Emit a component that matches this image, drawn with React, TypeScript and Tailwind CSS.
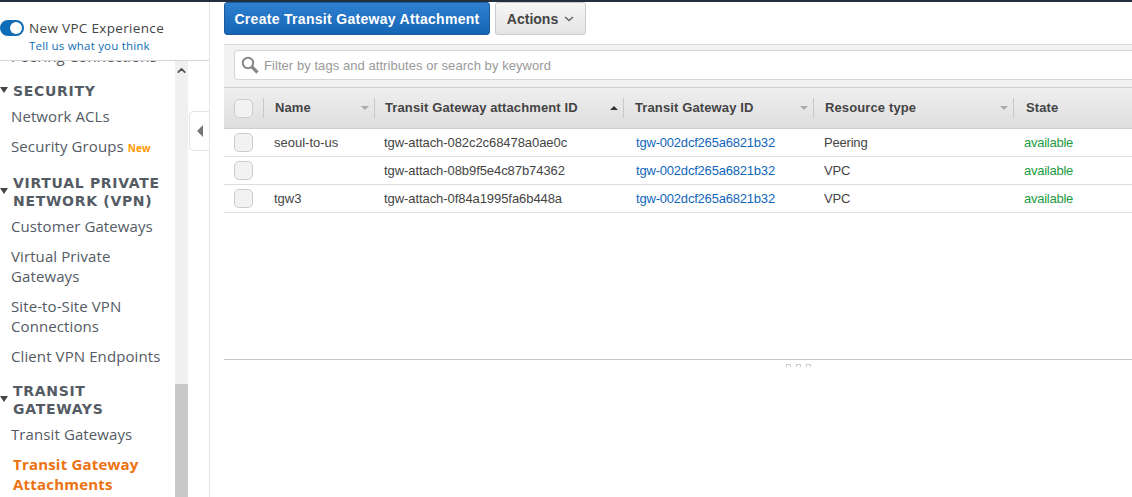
import { ChevronUp } from 'lucide-react'

const rows = [
  { name: 'seoul-to-us', id: 'tgw-attach-082c2c68478a0ae0c', type: 'Peering' },
  { name: '', id: 'tgw-attach-08b9f5e4c87b74362', type: 'VPC' },
  { name: 'tgw3', id: 'tgw-attach-0f84a1995fa6b448a', type: 'VPC' },
]

function NavItem({ children, active }: { children: React.ReactNode; active?: boolean }) {
  return (
    <div
      className={
        active
          ? 'pl-[13px] mb-2.5 text-[15px] font-bold leading-5 tracking-[0.2px] text-[#ec7211]'
          : 'pl-[11px] mb-2.5 text-[15px] leading-5 tracking-[0.1px] text-[#545b64]'
      }
    >
      {children}
    </div>
  )
}

function NavSection({ children }: { children: React.ReactNode }) {
  return (
    <div className="flex items-center mt-4 mb-1.5">
      <span className="w-0 h-0 -mt-[3px] border-x-[4px] border-x-transparent border-t-[6px] border-t-[#444] shrink-0 mr-[5px]" />
      <span className="font-['DejaVu_Sans',sans-serif] text-[14px] font-bold leading-[18px] tracking-[0.7px] text-[#545b64]">{children}</span>
    </div>
  )
}

function HeadCell({ label, arrow, up, pad = 'pl-[11px]' }: { label: string; arrow?: boolean; up?: boolean; pad?: string }) {
  return (
    <div className={`flex items-center justify-between h-5 pr-[5px] border-l border-[#c8c8c8] ${pad}`}>
      <span className="text-[13px] font-bold tracking-[0.12px] text-[#444]">{label}</span>
      {arrow && (
        <span
          className={
            up
              ? 'w-0 h-0 border-x-[4px] border-x-transparent border-b-[4px] border-b-[#333]'
              : 'w-0 h-0 border-x-[4px] border-x-transparent border-t-[4px] border-t-[#aaa]'
          }
        />
      )}
    </div>
  )
}

function Check() {
  return <div className="w-[19px] h-[19px] rounded-[5px] border border-[#ccc] bg-[#f2f2f2]" />
}

export default function App() {
  return (
    <div className="w-[1132px] h-[497px] overflow-hidden bg-white flex flex-col font-['Liberation_Sans',sans-serif]">
      <div className="h-0.5 shrink-0 bg-[#232f3e]" />
      <div className="flex flex-1 min-h-0">
        <aside className="w-[210px] shrink-0 border-r border-[#e4e4e4] flex flex-col font-['Open_Sans',sans-serif]">
          <div className="h-[59px] shrink-0 border-b border-[#d5d5d5] pt-[15px]">
            <div className="flex items-center">
              <div className="w-6 h-4 rounded-full bg-[#0f6cb6] flex items-center justify-end pr-0.5">
                <div className="w-3 h-3 rounded-full bg-white" />
              </div>
              <span className="ml-[5px] text-[13.5px] leading-[22px] tracking-[0.33px] text-[#444]">New VPC Experience</span>
            </div>
            <div className="pl-[29px] text-[11.5px] leading-[14px] tracking-[0.2px] text-[#0f6cb6]">Tell us what you think</div>
          </div>
          <div className="flex flex-1 min-h-0">
            <nav className="w-[175px] shrink-0 overflow-hidden">
              <div className="-mt-[15px]">
                <div className="pl-[11px] text-[15px] leading-5 tracking-[0.1px] text-[#545b64]">Peering Connections</div>
                <NavSection>SECURITY</NavSection>
                <NavItem>Network ACLs</NavItem>
                <NavItem>
                  Security Groups <span className="text-[10px] font-bold text-[#f90]">New</span>
                </NavItem>
                <NavSection>
                  VIRTUAL PRIVATE
                  <br />
                  NETWORK (VPN)
                </NavSection>
                <NavItem>Customer Gateways</NavItem>
                <NavItem>
                  Virtual Private
                  <br />
                  Gateways
                </NavItem>
                <NavItem>
                  Site-to-Site VPN
                  <br />
                  Connections
                </NavItem>
                <NavItem>Client VPN Endpoints</NavItem>
                <NavSection>
                  TRANSIT
                  <br />
                  GATEWAYS
                </NavSection>
                <NavItem>Transit Gateways</NavItem>
                <NavItem active>
                  Transit Gateway
                  <br />
                  Attachments
                </NavItem>
              </div>
            </nav>
            <div className="w-[13px] shrink-0 bg-[#f0f0f0] flex flex-col">
              <div className="flex-1 pt-[3px] flex justify-center">
                <ChevronUp size={13} strokeWidth={3} className="text-[#505050]" />
              </div>
              <div className="h-[113px] bg-[#c8c8c8]" />
            </div>
            <div className="flex-1 pl-px pt-[50px]">
              <div className="h-10 rounded-l-[5px] border border-r-0 border-[#e4e4e4] flex items-center pl-[7px]">
                <span className="w-0 h-0 border-y-[6px] border-y-transparent border-r-[6px] border-r-[#777]" />
              </div>
            </div>
          </div>
        </aside>
        <main className="flex-1 min-w-0 pl-[14px] flex flex-col overflow-hidden">
          <div className="flex gap-[5px] h-[42px] shrink-0">
            <button className="h-[33px] w-[266px] pt-px rounded-[3px] border border-[#1a5c9e] bg-gradient-to-b from-[#2f80d1] to-[#1565b5] text-[14px] font-bold tracking-[0.3px] text-white">
              Create Transit Gateway Attachment
            </button>
            <button className="h-[33px] w-[91px] pt-px rounded-[3px] border border-[#ccc] bg-gradient-to-b from-[#f6f6f6] to-[#e4e4e4] text-[14px] font-bold text-[#444] flex items-center justify-center gap-[6px]">
              Actions
              <svg width="10" height="6" viewBox="0 0 10 6" fill="none" stroke="#666" strokeWidth="1.6">
                <path d="M1 1l4 3.5L9 1" />
              </svg>
            </button>
          </div>
          <div className="h-[43px] shrink-0 bg-[#f2f2f2] border-t border-[#d8d8d8] pl-2.5 pt-[5px]">
            <div className="w-[1000px] h-[30px] bg-white border border-[#d5d5d5] rounded-l-[4px] flex items-center pl-1.5 gap-[5px]">
              <svg width="18" height="18" viewBox="0 0 18 18" fill="none" stroke="#888">
                <circle cx="7" cy="7" r="5.2" strokeWidth="2" />
                <path d="M11 11l5.5 5.5" strokeWidth="3.2" />
              </svg>
              <span className="pt-0.5 text-[13px] tracking-[0.06px] text-[#999]">Filter by tags and attributes or search by keyword</span>
            </div>
          </div>
          <div className="h-[42px] shrink-0 bg-gradient-to-b from-[#efefef] to-[#dedede] border-y border-[#cfcfcf] grid grid-cols-[39px_111px_249px_190px_200px_1fr] items-center">
            <div className="pl-2.5">
              <Check />
            </div>
            <HeadCell label="Name" arrow />
            <HeadCell label="Transit Gateway attachment ID" arrow up pad="pl-[10px]" />
            <HeadCell label="Transit Gateway ID" arrow />
            <HeadCell label="Resource type" arrow />
            <HeadCell label="State" pad="pl-[12px]" />
          </div>
          {rows.map((r) => (
            <div key={r.id} className="h-7 shrink-0 border-b border-[#dedede] grid grid-cols-[39px_111px_249px_190px_200px_1fr] items-center text-[13px] text-[#444]">
              <div className="pl-2.5">
                <Check />
              </div>
              <div className="pl-[11px]">{r.name}</div>
              <div className="pl-[10px] tracking-[-0.07px]">{r.id}</div>
              <div className="pl-[13px] tracking-[-0.2px] text-[#1166bb]">tgw-002dcf265a6821b32</div>
              <div className="pl-[11px] tracking-[-0.2px]">{r.type}</div>
              <div className="pl-[11px] tracking-[-0.25px] text-[#1d9c3f]">available</div>
            </div>
          ))}
          <div className="h-[147px] shrink-0 border-b border-[#c8c8c8]" />
          <div className="flex gap-[5px] pt-[4px] pl-[562px]">
            <div className="w-[5px] h-[3px] border-t border-x border-[#ccc]" />
            <div className="w-[5px] h-[3px] border-t border-x border-[#ccc]" />
            <div className="w-[5px] h-[3px] border-t border-x border-[#ccc]" />
          </div>
        </main>
      </div>
    </div>
  )
}
